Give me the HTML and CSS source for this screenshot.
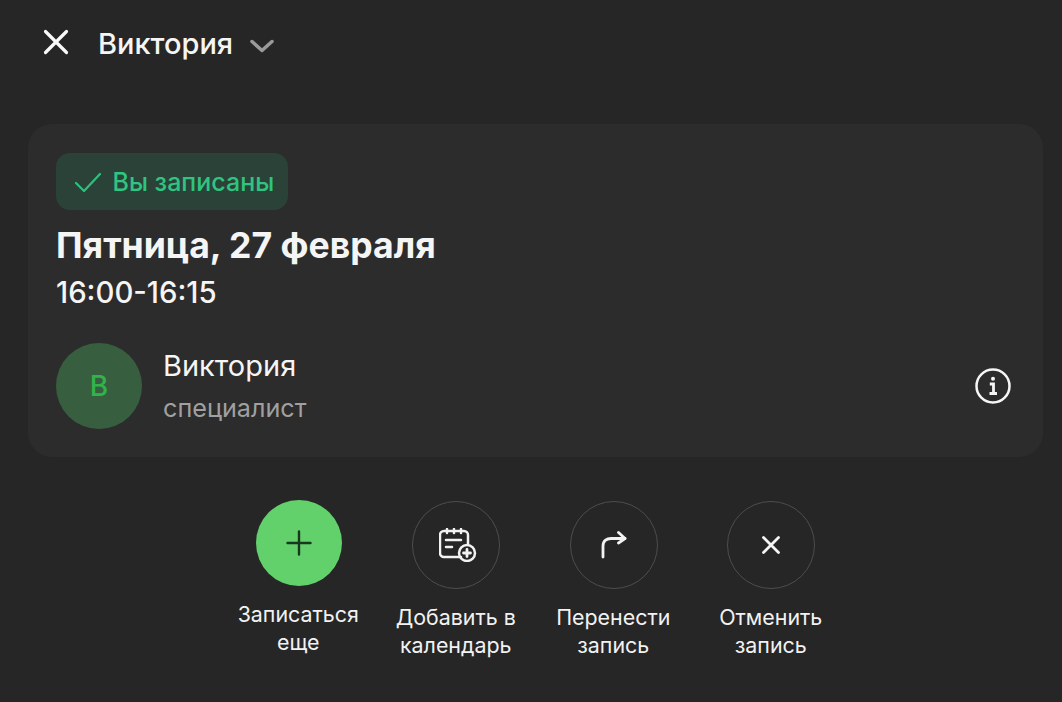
FILE: index.html
```html
<!DOCTYPE html>
<html lang="ru">
<head>
  <meta charset="UTF-8">
  <meta name="viewport" content="width=device-width, initial-scale=1.0">
  <title>Виктория</title>
  <link rel="stylesheet" href="styles.css">
</head>
<body>
  <div class="page">
    <header class="header">
      <svg class="close-icon" width="26" height="26" viewBox="0 0 26 26" fill="none" stroke="#fafafa" stroke-width="3.200" stroke-linecap="round"><path d="M2.500 2.500L23.500 23.500M23.500 2.500L2.500 23.500"/></svg>
      <span class="header-title">Виктория</span>
      <svg class="chevron" width="24" height="14" viewBox="0 0 24 14" fill="none" stroke="#9a9a9a" stroke-width="3.500" stroke-linecap="round" stroke-linejoin="round"><path d="M2 2.500L12 11.500L22 2.500"/></svg>
    </header>

    <section class="card">
      <div class="badge">
        <svg width="28" height="22" viewBox="0 0 28 22" fill="none" stroke="#2fc07f" stroke-width="2.200" stroke-linecap="round" stroke-linejoin="round"><path d="M2 12L10 20L26 3"/></svg>
        <span>Вы записаны</span>
      </div>
      <h1 class="date">Пятница, 27 февраля</h1>
      <div class="time">16:00-16:15</div>
      <div class="person">
        <div class="avatar">В</div>
        <div class="person-text">
          <div class="person-name">Виктория</div>
          <div class="person-role">специалист</div>
        </div>
        <svg class="info-icon" width="36" height="36" viewBox="0 0 36 36" fill="none" stroke="#f5f5f5"><circle cx="18" cy="18" r="16.500" stroke-width="2.500"/><circle cx="18" cy="10.800" r="2" fill="#f5f5f5" stroke="none"/><path d="M14.800 16H18.500V25M14.500 25.500H22" stroke-width="2.800"/></svg>
      </div>
    </section>

    <div class="actions">
      <div class="action action-primary">
        <div class="circle circle-green">
          <svg width="26" height="26" viewBox="0 0 26 26" fill="none" stroke="#17381f" stroke-width="2.400" stroke-linecap="round"><path d="M13 1.500V24.500M1.500 13H24.500"/></svg>
        </div>
        <div class="action-label">Записаться<br>еще</div>
      </div>
      <div class="action">
        <div class="circle">
          <svg class="calendar-icon" width="38" height="34" viewBox="0 0 38 34" fill="none" stroke="#f2f2f2" stroke-width="2.500" stroke-linecap="round" stroke-linejoin="round"><path d="M22 29H5a4 4 0 0 1-4-4V7a4 4 0 0 1 4-4h20a4 4 0 0 1 4 4v9"/><path d="M8 1v4M15 1v4M22 1v4M7 12h15M7 19h6"/><circle cx="28" cy="25" r="8"/><path d="M28 21.500v7M24.500 25h7" stroke-width="2.800"/></svg>
        </div>
        <div class="action-label">Добавить в<br>календарь</div>
      </div>
      <div class="action">
        <div class="circle">
          <svg width="26" height="28" viewBox="0 0 26 28" fill="none" stroke="#f2f2f2" stroke-width="2.800" stroke-linecap="round" stroke-linejoin="round"><path d="M2 26V15C2 9.500 6 7.500 10 7.500H24"/><path d="M17.500 1.500L24 7.500L17.500 12"/></svg>
        </div>
        <div class="action-label">Перенести<br>запись</div>
      </div>
      <div class="action">
        <div class="circle">
          <svg width="18" height="18" viewBox="0 0 18 18" fill="none" stroke="#f5f5f5" stroke-width="2.800" stroke-linecap="round"><path d="M1.500 1.500L16.500 16.500M16.500 1.500L1.500 16.500"/></svg>
        </div>
        <div class="action-label">Отменить<br>запись</div>
      </div>
    </div>
  </div>
</body>
</html>
```

FILE: styles.css
```css
body {
  margin: 0;
  background: #262626;
  color: #f5f5f5;
  font-family: Inter, "Noto Sans", sans-serif;
}
.page {
  width: 1062px;
  height: 702px;
  overflow: hidden;
  padding: 26px 19px 0 28px;
  box-sizing: border-box;
}
.header {
  display: flex;
  align-items: center;
  height: 36px;
  padding-left: 15px;
}
.close-icon {
  margin-right: 29px;
  margin-top: -4px;
}
.header-title {
  font-size: 29px;
  font-weight: 500;
  line-height: 36px;
}
.chevron {
  margin-left: 17px;
  margin-top: 4px;
}
.card {
  margin-top: 62px;
  height: 333px;
  box-sizing: border-box;
  padding: 29px 28px 0;
  background: #2c2c2c;
  border-radius: 24px;
}
.badge {
  display: inline-flex;
  align-items: center;
  gap: 10.500px;
  height: 57px;
  box-sizing: border-box;
  padding: 0 13.500px 0 18px;
  background: #2a4238;
  border-radius: 14px;
  color: #2fc480;
  font-size: 25px;
  font-weight: 500;
}
.date {
  margin: 13px 0 0;
  font-size: 35.600px;
  font-weight: 700;
  line-height: 46px;
}
.time {
  margin-top: 6px;
  font-size: 29.300px;
  font-weight: 500;
  line-height: 36px;
}
.person {
  display: flex;
  align-items: center;
  margin-top: 32px;
}
.avatar {
  width: 86px;
  height: 86px;
  border-radius: 50%;
  background: #385e40;
  color: #32b34a;
  display: flex;
  align-items: center;
  justify-content: center;
  font-size: 28px;
  font-weight: 500;
}
.person-text {
  margin-left: 21px;
  flex: 1;
}
.person-name {
  font-size: 29px;
  line-height: 36px;
  margin-top: -1px;
}
.person-role {
  margin-top: 8px;
  font-size: 25.200px;
  line-height: 32px;
  color: #a0a0a0;
}
.info-icon {
  margin-right: 4px;
}
.actions {
  display: grid;
  grid-template-columns: repeat(4, 157.500px);
  justify-content: center;
  margin-top: 44px;
  margin-left: -1px;
}
.action {
  display: flex;
  flex-direction: column;
  align-items: center;
}
.circle {
  width: 88px;
  height: 88px;
  box-sizing: border-box;
  border: 1.500px solid #4d4d4d;
  border-radius: 50%;
  display: flex;
  align-items: center;
  justify-content: center;
}
.circle-green {
  width: 86px;
  height: 86px;
  background: #62d16b;
  border: none;
}
.calendar-icon {
  margin-left: 3px;
}
.action-label {
  margin-top: 14px;
  margin-left: -1px;
  font-size: 21.400px;
  line-height: 28px;
  text-align: center;
  color: #f2f2f2;
  white-space: nowrap;
}
.action-primary {
  margin-top: -1px;
}
```
